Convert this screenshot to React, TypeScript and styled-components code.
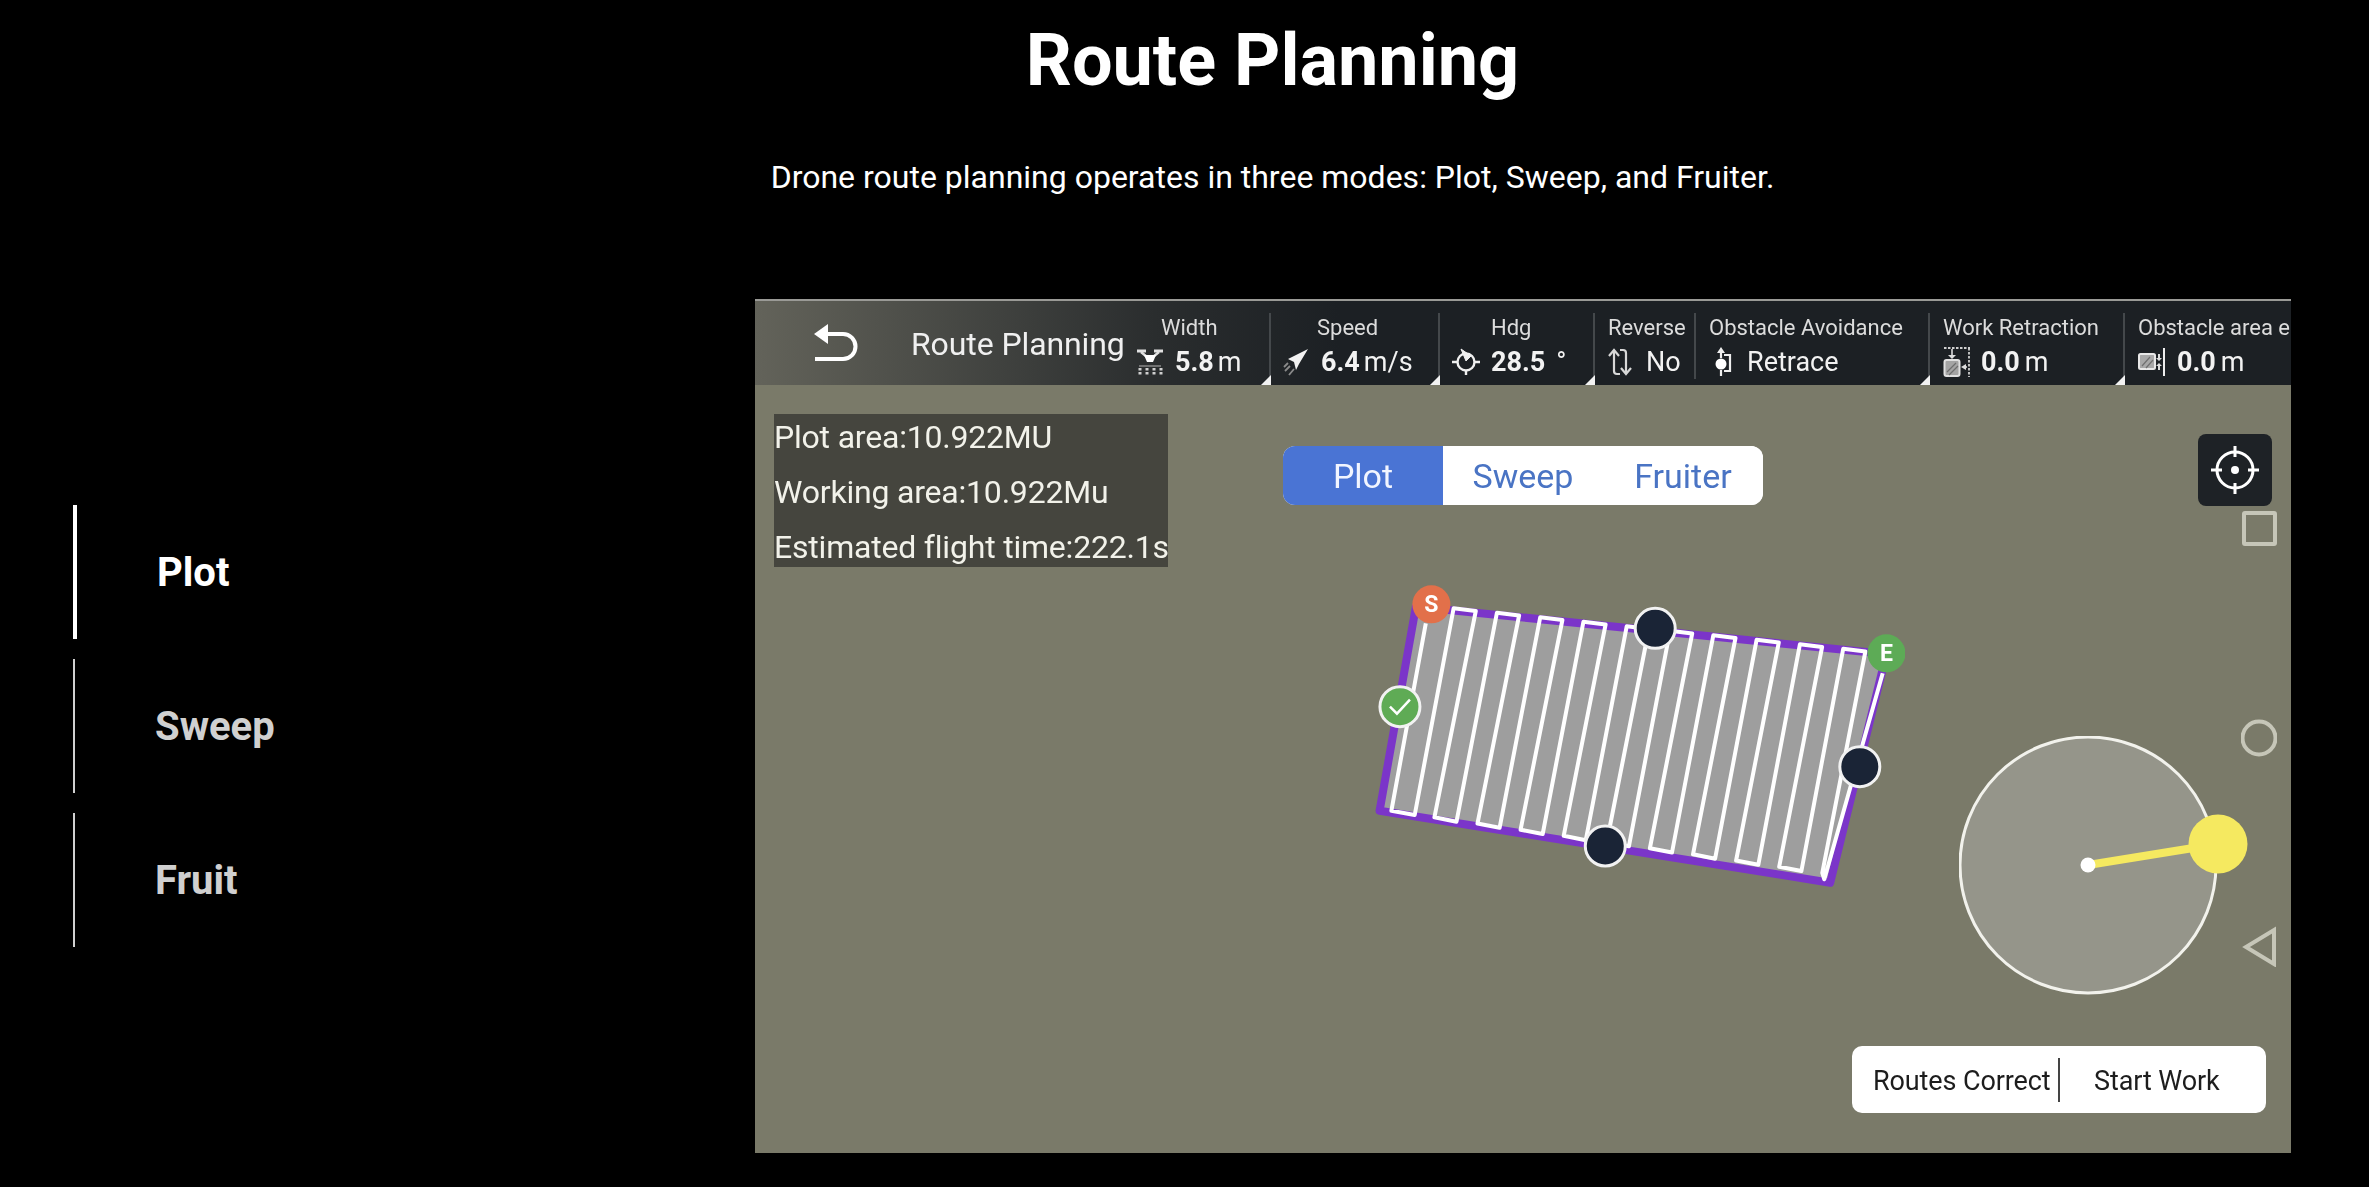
import React, { FC, ReactNode } from "react";
import styled, { createGlobalStyle } from "styled-components";

const GlobalStyle = createGlobalStyle`
  html, body {
    margin: 0;
    padding: 0;
    background: #000;
    font-family: Roboto, "Liberation Sans", sans-serif;
  }
`;

// zoomed-crop coordinates of the serpentine, mapped to the map's own pixels
const px = (x: number) => 1350 + x / 2.703 - 755;
const py = (y: number) => 570 + y / 3 - 385;
const pt = (x: number, y: number) => `${px(x).toFixed(1)} ${py(y).toFixed(1)}`;

const buildRoute = () => {
  let d = `M${pt(205, 160)} L${pt(112, 722)} L${pt(175, 735)}`;
  for (let i = 0; i < 10; i++) {
    const tx = 280 + i * 117;
    const ty = 115 + i * 13.5;
    const bx = 228 + i * 116.5;
    const by = 742 + i * 18.5;
    d += ` L${pt(tx, ty)} L${pt(tx + 60, ty + 8)} L${pt(bx, by)}`;
    if (i < 9) d += ` L${pt(bx + 60, by + 13)}`;
  }
  d += ` L${pt(1282, 928)} L${pt(1440, 310)}`;
  return d;
};

const tabs = [
  { label: "Plot", active: true },
  { label: "Sweep", active: false },
  { label: "Fruit", active: false },
];

const DroneIcon = () => (
  <svg width="28" height="30" viewBox="0 0 28 30" fill="none" stroke="#e0e0e0">
    <path d="M1 4h9M18 4h9" strokeWidth="3" />
    <path d="M5 5l6 5h6l6-5" strokeWidth="2.400" />
    <path d="M8 8h12l-3 7h-6z" fill="#fff" stroke="none" />
    <path d="M3 19h22" strokeWidth="1.500" stroke="#888" />
    <path d="M4 21v8M11 21v8M18 21v8M25 21v8" strokeWidth="3" strokeDasharray="2.500 1.500" stroke="#cfcfcf" />
  </svg>
);

const PlaneIcon = () => (
  <svg width="26" height="28" viewBox="0 0 26 28" fill="none">
    <path d="M25 1L5 11l6 3 2 8 3-6z" fill="#f2f2f2" />
    <path d="M7 18l-5 5M11 21l-5 6M5 15l-4 4" stroke="#8a8a8a" strokeWidth="1.800" />
  </svg>
);

const HeadingIcon = () => (
  <svg width="28" height="28" viewBox="0 0 28 28" fill="none" stroke="#f0f0f0" strokeWidth="2.400">
    <circle cx="14" cy="14" r="8.500" />
    <path d="M0 14h6M22 14h6M14 22v5" />
    <path d="M9 1l5 12 5-5z" fill="#f0f0f0" strokeWidth="1" />
  </svg>
);

const ReverseIcon = () => (
  <svg width="26" height="30" viewBox="0 0 26 30" fill="none" stroke="#d8d8d8" strokeWidth="2.200">
    <path d="M7 4v20a3 3 0 0 0 3 3h3" />
    <path d="M2 9l5-6 5 6" />
    <path d="M19 26V6a3 3 0 0 0-3-3h-3" />
    <path d="M14 21l5 6 5-6" />
  </svg>
);

const RetraceIcon = () => (
  <svg width="18" height="32" viewBox="0 0 18 32" fill="none" stroke="#eee" strokeWidth="2.200">
    <path d="M7 1l-4 6h8z" fill="#eee" stroke="none" />
    <path d="M7 7v5M7 24v6" />
    <circle cx="7" cy="18" r="5.500" fill="#fff" stroke="none" />
    <path d="M10 9h6v16h-6" />
  </svg>
);

const RetractionIcon = () => (
  <svg width="28" height="32" viewBox="0 0 28 32" fill="none">
    <path d="M1 2h26M26 2v29" stroke="#cfcfcf" strokeWidth="1.800" strokeDasharray="2.500 1.500" />
    <path d="M9 3v8" stroke="#ddd" strokeWidth="1.600" />
    <path d="M5 9h8l-4 4z" fill="#ddd" />
    <rect x="1.500" y="14" width="15" height="16" rx="2" fill="#a4a4a4" stroke="#e0e0e0" strokeWidth="2" />
    <path d="M4 26l9-9M6 29l9-9" stroke="#6e6e6e" strokeWidth="1.200" />
    <path d="M24 21h-4" stroke="#ddd" strokeWidth="1.600" />
    <path d="M23 18v6l-5-3z" fill="#ddd" />
  </svg>
);

const ObstacleAreaIcon = () => (
  <svg width="28" height="28" viewBox="0 0 28 28" fill="none">
    <rect x="1" y="6" width="16" height="15" rx="1.500" fill="#a8a8a8" stroke="#e8e8e8" strokeWidth="2" />
    <path d="M4 18l8-9M8 20l7-8" stroke="#707070" strokeWidth="1.200" />
    <path d="M26 0v28" stroke="#eee" strokeWidth="2" />
    <path d="M21 6v5M21 17v5" stroke="#ddd" strokeWidth="2" />
    <path d="M18 10h6l-3 3zM18 18h6l-3-3z" fill="#ddd" />
  </svg>
);

interface Metric {
  label: string;
  icon: ReactNode;
  value: string;
  unit?: string;
  unitGap?: number;
  plain?: boolean;
  width: number;
  labelLeft: number;
  rowLeft: number;
  gap: number;
  corner: boolean;
}

const metrics: Metric[] = [
  { label: "Width", icon: <DroneIcon />, value: "5.8", unit: "m", unitGap: 4, width: 139, labelLeft: 29, rowLeft: 4, gap: 11, corner: true },
  { label: "Speed", icon: <PlaneIcon />, value: "6.4", unit: "m/s", unitGap: 4, width: 169, labelLeft: 46, rowLeft: 12, gap: 12, corner: true },
  { label: "Hdg", icon: <HeadingIcon />, value: "28.5", unit: "°", unitGap: 11, width: 155, labelLeft: 51, rowLeft: 12, gap: 11, corner: true },
  { label: "Reverse", icon: <ReverseIcon />, value: "No", plain: true, width: 101, labelLeft: 13, rowLeft: 12, gap: 13, corner: false },
  { label: "Obstacle Avoidance", icon: <RetraceIcon />, value: "Retrace", plain: true, width: 234, labelLeft: 13, rowLeft: 18, gap: 15, corner: true },
  { label: "Work Retraction", icon: <RetractionIcon />, value: "0.0", unit: "m", unitGap: 5, width: 195, labelLeft: 13, rowLeft: 13, gap: 10, corner: true },
  { label: "Obstacle area edge", icon: <ObstacleAreaIcon />, value: "0.0", unit: "m", unitGap: 5, width: 240, labelLeft: 13, rowLeft: 13, gap: 11, corner: false },
];

const App: FC = () => {
  return (
    <Page>
      <GlobalStyle />
      <Intro>
        <h1>Route Planning</h1>
        <p>Drone route planning operates in three modes: Plot, Sweep, and Fruiter.</p>
      </Intro>
      <Main>
        <Tabs>
          {tabs.map((tab) => (
            <Tab key={tab.label} $active={tab.active}>
              {tab.label}
            </Tab>
          ))}
        </Tabs>
        <Screen>
          <Header>
            <BackButton>
              <svg width="46" height="40" viewBox="0 0 46 40" fill="none">
                <path d="M10 12h20a12.500 12.500 0 0 1 0 25H2" stroke="#fff" strokeWidth="4" />
                <path d="M15 2v20L1 12z" fill="#fff" />
              </svg>
            </BackButton>
            <HeaderTitle>Route Planning</HeaderTitle>
            {metrics.map((m) => (
              <Cell key={m.label} $width={m.width} $corner={m.corner}>
                <CellLabel $left={m.labelLeft}>{m.label}</CellLabel>
                <CellRow $left={m.rowLeft} $gap={m.gap}>
                  {m.icon}
                  <CellValue $plain={m.plain} $unitGap={m.unitGap}>
                    {m.value}
                    {m.unit && <small>{m.unit}</small>}
                  </CellValue>
                </CellRow>
              </Cell>
            ))}
          </Header>
          <MapArea>
            <InfoPanel>
              <div>Plot area:10.922MU</div>
              <div>Working area:10.922Mu</div>
              <div>Estimated flight time:222.1s</div>
            </InfoPanel>
            <ModeSwitch>
              <ModeOption $active $width={160}>Plot</ModeOption>
              <ModeOption $width={160}>Sweep</ModeOption>
              <ModeOption $width={160}>Fruiter</ModeOption>
            </ModeSwitch>
            <LocateButton>
              <svg width="52" height="52" viewBox="0 0 52 52" fill="none" stroke="#fff" strokeWidth="3">
                <circle cx="26" cy="26" r="18" />
                <path d="M26 2v11M26 39v11M2 26h11M39 26h11" />
                <circle cx="26" cy="26" r="4" fill="#fff" stroke="none" />
              </svg>
            </LocateButton>
            <NavKeys viewBox="0 0 36 456" fill="none" stroke="#c6c6b8" strokeWidth="4">
              <rect x="3" y="2" width="31" height="31" rx="1" />
              <circle cx="18" cy="227" r="16.500" />
              <path d="M33 419v34L5 436z" />
            </NavKeys>
            <Route viewBox="600 200 550 320">
              <path
                d={`M${pt(178, 110)} L${pt(1450, 252)} L${pt(1298, 938)} L${pt(80, 722)} Z`}
                fill="#9e9e9e"
                stroke="#7b35c9"
                strokeWidth="8"
                strokeLinejoin="round"
              />
              <path d={buildRoute()} fill="none" stroke="#fff" strokeWidth="4" strokeLinejoin="round" />
              <circle cx={px(220)} cy={py(103)} r="19" fill="#e2704a" />
              <RouteLetter x={px(220)} y={py(103) + 8}>S</RouteLetter>
              <circle cx={px(1450)} cy={py(250)} r="19" fill="#5dab56" />
              <RouteLetter x={px(1450)} y={py(250) + 8}>E</RouteLetter>
              <circle cx={px(135)} cy={py(410)} r="20" fill="#5fab55" stroke="#f2f2f2" strokeWidth="3" />
              <path
                d={`M${px(135) - 10} ${py(410)} l7 7 l13 -14`}
                fill="none"
                stroke="#fff"
                strokeWidth="2.500"
              />
              <circle cx={px(825)} cy={py(175)} r="20" fill="#1a2436" stroke="#f2f2f2" strokeWidth="3" />
              <circle cx={px(1378)} cy={py(590)} r="20" fill="#1a2436" stroke="#f2f2f2" strokeWidth="3" />
              <circle cx={px(690)} cy={py(828)} r="20" fill="#1a2436" stroke="#f2f2f2" strokeWidth="3" />
            </Route>
            <Dial viewBox="0 0 300 270" fill="none">
              <circle cx="129" cy="129" r="128" fill="#95958a" stroke="#f2f2ec" strokeWidth="3" />
              <path d="M129 129L259 108" stroke="#f5e960" strokeWidth="8" />
              <circle cx="259" cy="108" r="29.500" fill="#f5e960" />
              <circle cx="129" cy="129" r="7.500" fill="#fff" />
            </Dial>
            <ActionBar>
              <ActionText $width={208} $left={21} $divider>Routes Correct</ActionText>
              <ActionText $width={206} $left={34}>Start Work</ActionText>
            </ActionBar>
          </MapArea>
        </Screen>
      </Main>
    </Page>
  );
};

export default App;

const Page = styled.div`
  width: 2369px;
  height: 1187px;
  overflow: hidden;
  background: #000;
  color: #fff;
`;

const Intro = styled.header`
  height: 299px;
  padding-left: 176px;
  text-align: center;
  box-sizing: border-box;

  h1 {
    margin: 0;
    padding-top: 17px;
    font-size: 72px;
    line-height: 88px;
    font-weight: 700;
  }

  p {
    margin: 48px 0 0;
    font-size: 32px;
    line-height: 48px;
  }
`;

const Main = styled.main`
  display: flex;
  align-items: center;
  padding-left: 73px;
`;

const Tabs = styled.nav`
  display: flex;
  flex-direction: column;
  gap: 20px;
  width: 682px;
`;

const Tab = styled.div<{ $active?: boolean }>`
  height: 134px;
  display: flex;
  align-items: center;
  padding-left: 80px;
  font-size: 40px;
  font-weight: 700;
  box-sizing: border-box;
  color: ${({ $active }) => ($active ? "#fff" : "#d0d0d0")};
  border-left: ${({ $active }) => ($active ? "4px solid #fff" : "2px solid #d0d0d0")};
`;

const Screen = styled.section`
  width: 1536px;
  height: 854px;
  display: flex;
  flex-direction: column;
  overflow: hidden;
  background: #7a7a69;
  filter: blur(0.6px);
`;

const Header = styled.div`
  flex: none;
  height: 86px;
  display: flex;
  border-top: 2px solid #9a9a96;
  box-sizing: border-box;
  overflow: hidden;
  white-space: nowrap;
  background: linear-gradient(90deg, #63635a 0, #2a2d2e 26%, #1c2024 38%, #1c2024 100%);
`;

const BackButton = styled.div`
  flex: none;
  width: 156px;
  padding: 21px 0 0 58px;
  box-sizing: border-box;
`;

const HeaderTitle = styled.div`
  flex: none;
  width: 221px;
  padding-top: 24px;
  font-size: 32px;
  letter-spacing: -0.1px;
  line-height: 38px;
  color: #f0f0f0;
`;

const Cell = styled.div<{ $width: number; $corner?: boolean }>`
  flex: none;
  position: relative;
  width: ${({ $width }) => $width}px;
  box-sizing: border-box;

  &::before {
    content: "";
    position: absolute;
    right: 0;
    top: 12px;
    bottom: ${({ $corner }) => ($corner ? "0" : "6px")};
    width: 2px;
    background: #44484b;
  }

  &::after {
    content: "";
    display: ${({ $corner }) => ($corner ? "block" : "none")};
    position: absolute;
    right: 0;
    bottom: 0;
    border-style: solid;
    border-width: 0 0 10px 10px;
    border-color: transparent transparent #f2f2f2 transparent;
  }
`;

const CellLabel = styled.div<{ $left: number }>`
  margin-top: 14px;
  padding-left: ${({ $left }) => $left}px;
  font-size: 22px;
  line-height: 26px;
  color: #dcdcdc;
`;

const CellRow = styled.div<{ $left: number; $gap: number }>`
  display: flex;
  align-items: center;
  height: 32px;
  margin-top: 5px;
  padding-left: ${({ $left }) => $left}px;
  gap: ${({ $gap }) => $gap}px;
`;

const CellValue = styled.div<{ $plain?: boolean; $unitGap?: number }>`
  font-size: 27px;
  font-weight: ${({ $plain }) => ($plain ? 400 : 700)};
  color: #f2f2f2;

  small {
    margin-left: ${({ $unitGap }) => $unitGap ?? 5}px;
    font-size: 27px;
    font-weight: 400;
  }
`;

const MapArea = styled.div`
  position: relative;
  flex: 1;
`;

const InfoPanel = styled.div`
  position: absolute;
  left: 19px;
  top: 29px;
  width: 394px;
  height: 153px;
  padding-top: 3px;
  box-sizing: border-box;
  display: flex;
  flex-direction: column;
  justify-content: center;
  background: #45453e;
  font-size: 32px;
  letter-spacing: -0.2px;
  line-height: 55px;
  color: #f2f2ea;
  white-space: nowrap;
`;

const ModeSwitch = styled.div`
  position: absolute;
  left: 528px;
  top: 61px;
  display: flex;
  border-radius: 12px;
  overflow: hidden;
  background: #fff;
`;

const ModeOption = styled.div<{ $active?: boolean; $width: number }>`
  width: ${({ $width }) => $width}px;
  height: 59px;
  display: flex;
  align-items: center;
  justify-content: center;
  font-size: 34px;
  color: ${({ $active }) => ($active ? "#f2f5ff" : "#4a74c4")};
  background: ${({ $active }) => ($active ? "#4a74d4" : "#fff")};
`;

const LocateButton = styled.div`
  position: absolute;
  left: 1443px;
  top: 49px;
  width: 74px;
  height: 72px;
  display: flex;
  align-items: center;
  justify-content: center;
  border-radius: 8px;
  background: #1e2226;
`;

const NavKeys = styled.svg`
  position: absolute;
  left: 1486px;
  top: 126px;
  width: 36px;
  height: 456px;
`;

const Route = styled.svg`
  position: absolute;
  left: 600px;
  top: 200px;
  width: 550px;
  height: 320px;
`;

const RouteLetter = styled.text`
  font-family: Roboto, sans-serif;
  font-size: 23px;
  font-weight: 700;
  fill: #fff;
  text-anchor: middle;
`;

const Dial = styled.svg`
  position: absolute;
  left: 1204px;
  top: 351px;
  width: 300px;
  height: 270px;
`;

const ActionBar = styled.div`
  position: absolute;
  left: 1097px;
  top: 661px;
  width: 414px;
  height: 67px;
  display: flex;
  align-items: center;
  border-radius: 10px;
  background: #fff;
`;

const ActionText = styled.div<{ $width: number; $left: number; $divider?: boolean }>`
  width: ${({ $width }) => $width}px;
  height: 44px;
  line-height: 46px;
  padding-left: ${({ $left }) => $left}px;
  box-sizing: border-box;
  font-size: 27px;
  letter-spacing: -0.1px;
  color: #1d1d1d;
  border-right: ${({ $divider }) => ($divider ? "2px solid #444" : "none")};
`;
